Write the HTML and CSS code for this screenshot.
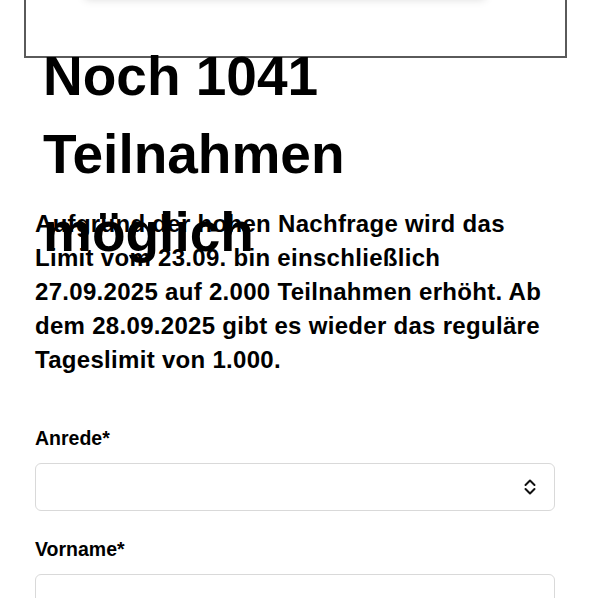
FILE: index.html
```html
<!DOCTYPE html>
<html lang="de">
<head>
    <meta charset="UTF-8">
    <meta name="viewport" content="width=device-width, initial-scale=1.0">
    <title>Teilnahme</title>
    <link rel="stylesheet" href="styles.css">
</head>
<body>
    <main class="page">
        <!-- Banner oben (bereits gescrollt) -->
        <div class="banner">
            <div class="banner-card"></div>
        </div>

        <div class="counter">
            <h1>Noch 1041 Teilnahmen möglich</h1>
        </div>

        <p class="notice">Aufgrund der hohen Nachfrage wird das Limit vom 23.09. bin einschließlich 27.09.2025 auf 2.000 Teilnahmen erhöht. Ab dem 28.09.2025 gibt es wieder das reguläre Tageslimit von 1.000.</p>

        <form class="form">
            <label class="field-label" for="anrede">Anrede*</label>
            <div class="select-wrap">
                <select id="anrede" class="field">
                    <option></option>
                    <option>Frau</option>
                    <option>Herr</option>
                    <option>Divers</option>
                </select>
                <svg class="select-icon" width="12" height="16" viewBox="0 0 12 16">
                    <polyline points="1.5,6 6,1.5 10.5,6" fill="none" stroke="#111" stroke-width="2" stroke-linecap="round" stroke-linejoin="round"/>
                    <polyline points="1.5,10 6,14.5 10.5,10" fill="none" stroke="#111" stroke-width="2" stroke-linecap="round" stroke-linejoin="round"/>
                </svg>
            </div>

            <label class="field-label" for="vorname">Vorname*</label>
            <input id="vorname" class="field" type="text">
        </form>
    </main>
</body>
</html>
```

FILE: styles.css
```css
* {
    box-sizing: border-box;
    margin: 0;
    padding: 0;
}

body {
    font-family: 'Liberation Sans', Arial, Helvetica, sans-serif;
    background-color: #fff;
    color: #000;
    overflow: hidden;
}

.page {
    padding: 0 35px;
}

/* Banner */
.banner {
    margin: -100px -12px 0 -11px;
    height: 158px;
    border: 2px solid #5a5a5a;
    background-color: #fff;
}

.banner-card {
    margin-left: 59px;
    width: 400px;
    height: 94px;
    background-color: #fff;
    box-shadow: 0 3px 9px rgba(0, 0, 0, 0.16);
}

/* Zähler */
.counter {
    margin-top: -21px;
    height: 170px;
    padding-left: 8px;
}

.counter h1 {
    font-size: 55px;
    line-height: 78px;
    font-weight: bold;
}

.notice {
    font-size: 24px;
    line-height: 34px;
    font-weight: bold;
    letter-spacing: 0.3px;
}

/* Formular */
.form {
    margin-top: 49px;
}

.field-label {
    display: block;
    font-size: 19.5px;
    line-height: 24px;
    font-weight: bold;
    margin-bottom: 13px;
}

.field {
    display: block;
    width: 100%;
    height: 48px;
    border: 1.5px solid #d9d9d9;
    border-radius: 6px;
    background-color: #fff;
    font-family: inherit;
    font-size: 18px;
    padding: 0 14px;
    -webkit-appearance: none;
    appearance: none;
}

.select-wrap {
    position: relative;
    margin-bottom: 26px;
}

.select-icon {
    position: absolute;
    right: 19px;
    top: 16px;
    pointer-events: none;
}
```
